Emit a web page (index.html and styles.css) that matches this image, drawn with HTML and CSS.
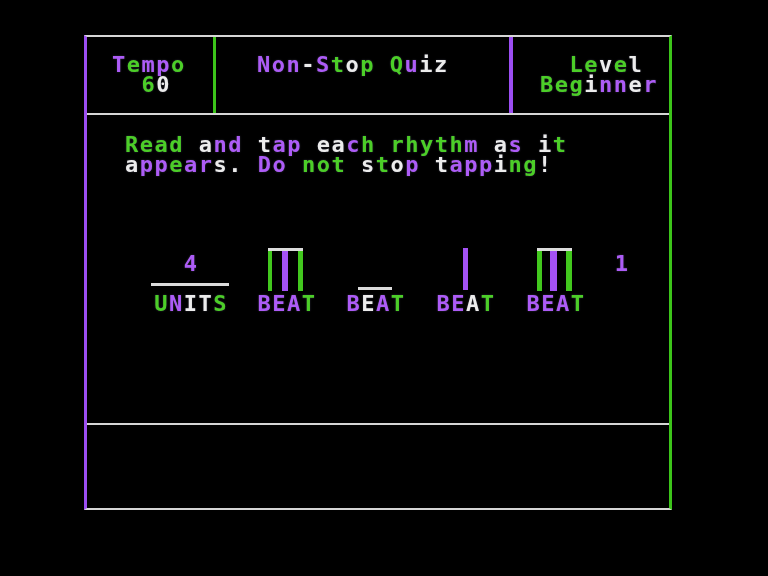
FILE: index.html
```html
<!DOCTYPE html>
<html lang="en">
<head>
<meta charset="utf-8">
<title>Non-Stop Quiz</title>
<link rel="stylesheet" href="styles.css">
</head>
<body>
<div class="screen">
  <header class="header">
    <div class="cell cell-tempo"><span class="p">T</span><span class="g">e</span><span class="p">m</span><span class="p">p</span><span class="g">o</span>
  <span class="g">6</span><span class="w">0</span></div>
    <div class="cell cell-title"><span class="p">N</span><span class="p">o</span><span class="p">n</span><span class="w">-</span><span class="p">S</span><span class="g">t</span><span class="w">o</span><span class="g">p</span> <span class="g">Q</span><span class="p">u</span><span class="w">i</span><span class="w">z</span></div>
    <div class="cell cell-level">  <span class="g">L</span><span class="g">e</span><span class="w">v</span><span class="g">e</span><span class="w">l</span>
<span class="g">B</span><span class="g">e</span><span class="g">g</span><span class="w">i</span><span class="p">n</span><span class="p">n</span><span class="w">e</span><span class="p">r</span></div>
  </header>
  <main class="main">
    <p class="instructions"><span class="g">R</span><span class="g">e</span><span class="g">a</span><span class="g">d</span> <span class="w">a</span><span class="p">n</span><span class="p">d</span> <span class="w">t</span><span class="p">a</span><span class="p">p</span> <span class="w">e</span><span class="w">a</span><span class="p">c</span><span class="g">h</span> <span class="g">r</span><span class="g">h</span><span class="g">y</span><span class="g">t</span><span class="g">h</span><span class="p">m</span> <span class="w">a</span><span class="p">s</span> <span class="w">i</span><span class="g">t</span><br><span class="w">a</span><span class="p">p</span><span class="p">p</span><span class="g">e</span><span class="p">a</span><span class="p">r</span><span class="w">s</span><span class="w">.</span> <span class="p">D</span><span class="p">o</span> <span class="g">n</span><span class="g">o</span><span class="g">t</span> <span class="w">s</span><span class="g">t</span><span class="w">o</span><span class="p">p</span> <span class="w">t</span><span class="p">a</span><span class="p">p</span><span class="p">p</span><span class="w">i</span><span class="g">n</span><span class="g">g</span><span class="w">!</span></p>
    <div class="rhythm">
      <div class="item">
        <div class="glyph">
          <div class="num p">4</div>
          <div class="fraction-bar"></div>
        </div>
        <div class="label"><span class="g">U</span><span class="p">N</span><span class="w">I</span><span class="w">T</span><span class="g">S</span></div>
      </div>
      <div class="item">
        <div class="glyph">
          <svg class="note" width="36" height="43" viewBox="0 0 36 43">
            <rect class="fg" x="0" y="3" width="4" height="40"/>
            <rect class="fp" x="14" y="3" width="6" height="40"/>
            <rect class="fg" x="30" y="3" width="5" height="40"/>
            <rect class="fw" x="0" y="0" width="35" height="3"/>
          </svg>
        </div>
        <div class="label"><span class="p">B</span><span class="p">E</span><span class="p">A</span><span class="g">T</span></div>
      </div>
      <div class="item">
        <div class="glyph">
          <div class="rest"></div>
        </div>
        <div class="label"><span class="p">B</span><span class="w">E</span><span class="p">A</span><span class="g">T</span></div>
      </div>
      <div class="item">
        <div class="glyph">
          <div class="stem"></div>
        </div>
        <div class="label"><span class="p">B</span><span class="p">E</span><span class="w">A</span><span class="g">T</span></div>
      </div>
      <div class="item">
        <div class="glyph">
          <svg class="note" width="36" height="43" viewBox="0 0 36 43">
            <rect class="fg" x="0" y="3" width="5" height="40"/>
            <rect class="fp" x="13" y="3" width="7" height="40"/>
            <rect class="fg" x="29" y="3" width="6" height="40"/>
            <rect class="fw" x="0" y="0" width="35" height="3"/>
          </svg>
        </div>
        <div class="label"><span class="p">B</span><span class="p">E</span><span class="p">A</span><span class="g">T</span></div>
      </div>
      <div class="item">
        <div class="glyph">
          <div class="num p">1</div>
        </div>
      </div>
    </div>
  </main>
  <footer class="footer"></footer>
</div>
</body>
</html>
```

FILE: styles.css
```css
html, body {
  margin: 0;
  padding: 0;
  background: #000;
}

body {
  width: 768px;
  height: 576px;
  overflow: hidden;
  font-family: "DejaVu Sans Mono", "Liberation Mono", monospace;
  font-weight: bold;
  font-size: 22px;
  line-height: 20px;
  letter-spacing: 1.5px;
  color: #e6e6e6;
}

.g { color: #4cce28; }
.p { color: #ad5cf6; }
.w { color: #ececec; }

.fg { fill: #42c81e; }
.fp { fill: #a452f4; }
.fw { fill: #dcdcdc; }

.screen {
  margin: 35px 0 0 84px;
  width: 582px;
  border-left: 3px solid #9c4ef2;
  border-right: 3px solid #3cc41a;
  border-top: 2px solid #d6d6d6;
  border-bottom: 2px solid #d6d6d6;
  display: flex;
  flex-direction: column;
  filter: blur(0.6px);
  text-shadow: 0 0 2px rgba(200, 200, 255, 0.25);
}

.header {
  height: 76px;
  border-bottom: 2px solid #d6d6d6;
  display: grid;
  grid-template-columns: 129px 297px 156px;
}

.cell {
  box-sizing: border-box;
  padding-top: 18px;
  white-space: pre;
}

.cell-tempo {
  padding-left: 25px;
  border-right: 3px solid #3cc41a;
}

.cell-title {
  padding-left: 41px;
  border-right: 4px solid #9c4ef2;
}

.cell-level {
  padding-left: 27px;
}

.main {
  box-sizing: border-box;
  height: 310px;
  border-bottom: 2px solid #d6d6d6;
  padding: 20px 0 0 38px;
}

.instructions {
  margin: 0;
}

.rhythm {
  margin: 73px 0 0 20px;
  display: grid;
  grid-template-columns: 90px 102px 76px 104px 76px 56px;
}

.item {
  display: flex;
  flex-direction: column;
  align-items: center;
}

.glyph {
  height: 46px;
  display: flex;
  flex-direction: column;
  align-items: center;
}

.num {
  margin-top: 6px;
  padding-left: 2px;
}

.fraction-bar {
  margin-top: 9px;
  width: 78px;
  height: 3px;
  background: #dcdcdc;
}

.note {
  display: block;
}

.rest {
  margin-top: 39px;
  width: 34px;
  height: 3px;
  background: #dcdcdc;
}

.stem {
  width: 5px;
  height: 42px;
  background: #a452f4;
}

.label {
  padding-left: 2px;
}

.footer {
  height: 83px;
}
```
